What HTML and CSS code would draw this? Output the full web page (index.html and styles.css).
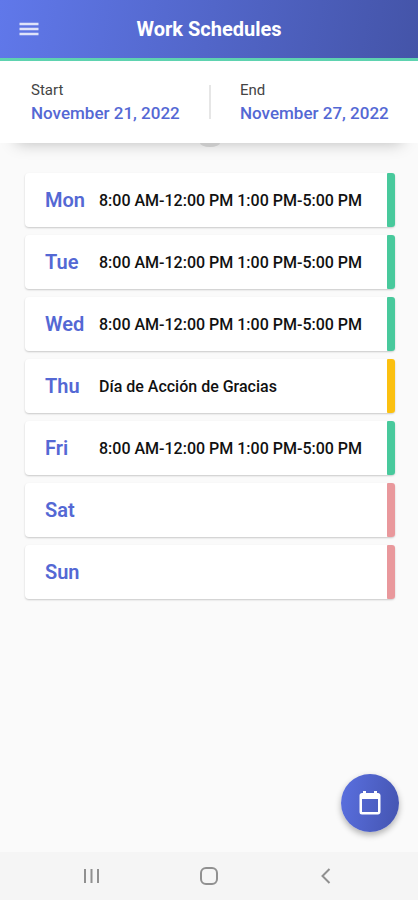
FILE: index.html
```html
<!DOCTYPE html>
<html lang="en">
<head>
<meta charset="utf-8">
<meta name="viewport" content="width=device-width, initial-scale=1">
<title>Work Schedules</title>
<link rel="stylesheet" href="styles.css">
</head>
<body>
<div class="app">
  <header class="topbar">
    <button class="menu" type="button" aria-label="Menu">
      <svg viewBox="0 0 24 24" width="24" height="24" fill="currentColor"><path d="M2.500 18.300h19v-2.600h-19v2.600zm0-5h19v-2.600h-19v2.600zm0-7.600v2.600h19V5.700h-19z"/></svg>
    </button>
    <h1 class="title">Work Schedules</h1>
  </header>

  <section class="range">
    <div class="date">
      <span class="date-label">Start</span>
      <span class="date-value">November 21, 2022</span>
    </div>
    <div class="date date-end">
      <span class="date-label">End</span>
      <span class="date-value">November 27, 2022</span>
    </div>
  </section>

  <main class="content">
    <ul class="days">
      <li class="day work"><span class="name">Mon</span><span class="hours">8:00 AM-12:00 PM 1:00 PM-5:00 PM</span></li>
      <li class="day work"><span class="name">Tue</span><span class="hours">8:00 AM-12:00 PM 1:00 PM-5:00 PM</span></li>
      <li class="day work"><span class="name">Wed</span><span class="hours">8:00 AM-12:00 PM 1:00 PM-5:00 PM</span></li>
      <li class="day holiday"><span class="name">Thu</span><span class="hours">Día de Acción de Gracias</span></li>
      <li class="day work"><span class="name">Fri</span><span class="hours">8:00 AM-12:00 PM 1:00 PM-5:00 PM</span></li>
      <li class="day off"><span class="name">Sat</span></li>
      <li class="day off"><span class="name">Sun</span></li>
    </ul>
    <button class="fab" type="button" aria-label="Choose week">
      <svg viewBox="0 0 26 26" width="26" height="26" fill="currentColor"><path fill-rule="evenodd" d="M6 1h3v2h8V1h3v2h1c1.400 0 2.500 1.100 2.500 2.500v16.500c0 1.400-1.100 2.500-2.500 2.500H5A2.500 2.500 0 0 1 2.500 22V5.500C2.500 4.100 3.600 3 5 3h1zM5 9v13h16V9z"/></svg>
    </button>
  </main>

  <nav class="system">
    <button type="button" aria-label="Recent apps">
      <svg viewBox="0 0 20 20" width="20" height="20"><path d="M3 3v14M9.500 3v14M16 3v14"/></svg>
    </button>
    <button type="button" aria-label="Home">
      <svg viewBox="0 0 20 20" width="20" height="20"><rect x="2" y="2" width="16" height="16" rx="5"/></svg>
    </button>
    <button type="button" aria-label="Back">
      <svg viewBox="0 0 20 20" width="20" height="20"><path d="M13.500 3L6.500 10l7 7"/></svg>
    </button>
  </nav>
</div>
</body>
</html>
```
FILE: styles.css
```css
* {
  box-sizing: border-box;
}

body {
  margin: 0;
  font-family: Roboto, "Liberation Sans", sans-serif;
  background: #fafafa;
  color: #111;
}

button {
  border: 0;
  padding: 0;
  background: none;
  color: inherit;
  display: flex;
  align-items: center;
  justify-content: center;
}

.app {
  min-height: 100vh;
  display: flex;
  flex-direction: column;
}

.topbar {
  display: grid;
  grid-template-columns: 58px 1fr 58px;
  align-items: center;
  height: 61px;
  border-style: solid;
  border-width: 0 0 3px;
  border-image: linear-gradient(#43bfa4, #5fd3b0) 3;
  background: linear-gradient(100deg, #6078ea, #4454a8) border-box;
  color: #fff;
}

.menu {
  height: 56px;
}

.menu svg {
  opacity: 0.8;
}

.title {
  margin: 0;
  font-size: 20px;
  line-height: 24px;
  font-weight: 700;
  text-align: center;
}

.range {
  position: relative;
  display: grid;
  grid-template-columns: 1fr 1fr;
  padding: 19px 0 18px;
  background: #fff;
  box-shadow: 0 16px 16px -16px rgba(0, 0, 0, 0.26);
}

/* Lower edge of the pull-down handle behind the panel */
.range::after {
  content: "";
  position: absolute;
  top: 100%;
  left: 50%;
  width: 20px;
  height: 4px;
  margin-left: -9px;
  border-radius: 0 0 50% 50% / 0 0 100% 100%;
  background: #c8c8c8;
}

.date {
  display: flex;
  flex-direction: column;
  padding-left: 31px;
}

.date-end {
  position: relative;
}

.date-end::before {
  content: "";
  position: absolute;
  left: 0;
  top: 5px;
  width: 2px;
  height: 34px;
  background: #e6e6e6;
}

.date-label {
  font-size: 15px;
  line-height: 21px;
  color: #444;
}

.date-value {
  font-size: 17px;
  line-height: 24px;
  font-weight: 500;
  color: #5468d4;
}

.content {
  position: relative;
  flex: 1;
  padding: 30px 23px 20px 25px;
}

.days {
  list-style: none;
  margin: 0;
  padding: 0;
  display: flex;
  flex-direction: column;
  gap: 8px;
}

.day {
  display: flex;
  align-items: center;
  height: 54px;
  padding-left: 20px;
  border-radius: 4px;
  background: #fff;
  box-shadow: 0 1px 2px rgba(0, 0, 0, 0.2);
}

.day::after {
  content: "";
  align-self: stretch;
  width: 8px;
  margin-left: auto;
  border-radius: 1px 3px 3px 1px;
}

.work::after {
  background: #48c99c;
}

.holiday::after {
  background: #fbc010;
}

.off::after {
  background: #e9989c;
}

.name {
  width: 54px;
  font-size: 20px;
  font-weight: 600;
  color: #5468d4;
}

.hours {
  font-size: 16px;
  font-weight: 500;
}

.fab {
  position: absolute;
  right: 19px;
  bottom: 20px;
  width: 58px;
  height: 58px;
  border-radius: 50%;
  background: linear-gradient(100deg, #5a70e0, #4454b0);
  box-shadow: 0 3px 6px rgba(0, 0, 0, 0.3);
  color: #fff;
}

.system {
  display: flex;
  justify-content: space-between;
  align-items: center;
  height: 48px;
  padding: 0 82px;
  background: #f5f5f5;
}

.system svg {
  fill: none;
  stroke: #909090;
  stroke-width: 2;
}
```
